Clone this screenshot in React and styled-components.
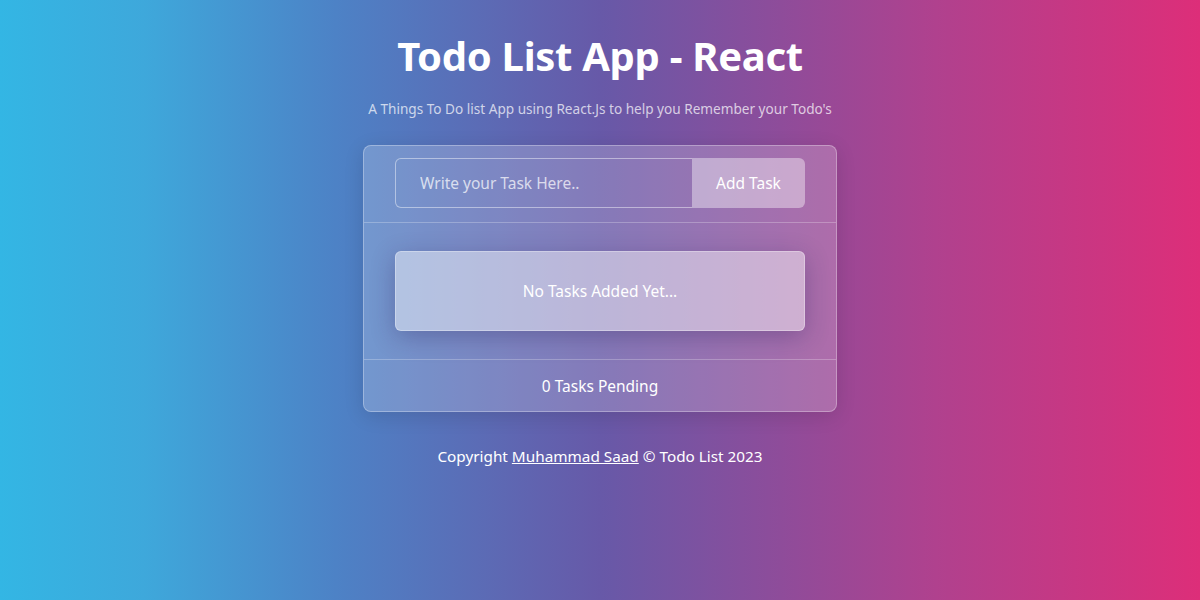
import styled, { createGlobalStyle } from "styled-components";

const GlobalStyle = createGlobalStyle`
  * { box-sizing: border-box; }
  html, body { margin: 0; padding: 0; }
  body {
    font-family: "Noto Sans", "Open Sans", sans-serif;
    background: linear-gradient(to right, #33b6e4 0%, #3ea8db 12%, #4d82c6 28%, #6759a8 50%, #b0418e 78%, #dd2e79 100%);
    min-height: 100vh;
    color: #fff;
  }
`;

const App = () => {
  return (
    <>
      <GlobalStyle />
      <Page>
        <Title>Todo List App - React</Title>
        <Subtitle>
          A Things To Do list App using React.Js to help you Remember your Todo's
        </Subtitle>
        <Card>
          <FormSection>
            <TaskForm onSubmit={(e) => e.preventDefault()}>
              <TaskInput type="text" placeholder="Write your Task Here.." />
              <AddButton type="submit">Add Task</AddButton>
            </TaskForm>
          </FormSection>
          <ListSection>
            <EmptyBox>No Tasks Added Yet...</EmptyBox>
          </ListSection>
          <CardFooter>0 Tasks Pending</CardFooter>
        </Card>
        <Copyright>
          Copyright <a href="#">Muhammad Saad</a> © Todo List 2023
        </Copyright>
      </Page>
    </>
  );
};

export default App;

const Page = styled.div`
  display: flex;
  flex-direction: column;
  align-items: center;
  padding-top: 30px;
  min-height: 600px;
`;

const Title = styled.h1`
  margin: 0;
  font-size: 40px;
  font-weight: 700;
  line-height: 52px;
  letter-spacing: -0.3px;
`;

const Subtitle = styled.p`
  margin: 17px 0 0;
  font-size: 13.6px;
  line-height: 20px;
  color: rgba(255, 255, 255, 0.72);
`;

const Card = styled.div`
  margin-top: 26px;
  width: 474px;
  background: rgba(255, 255, 255, 0.2);
  border: 1px solid rgba(255, 255, 255, 0.3);
  border-radius: 8px;
  box-shadow: 0 4px 20px rgba(0, 0, 0, 0.12);
`;

const FormSection = styled.div`
  padding: 12px 31px 14px;
  border-bottom: 1px solid rgba(255, 255, 255, 0.25);
`;

const TaskForm = styled.form`
  display: flex;
  height: 50px;
`;

const TaskInput = styled.input`
  flex: 1;
  min-width: 0;
  height: 100%;
  padding: 0 24px;
  font-family: inherit;
  font-size: 15.5px;
  color: #fff;
  background: transparent;
  border: 1px solid rgba(255, 255, 255, 0.45);
  border-right: none;
  border-radius: 6px 0 0 6px;
  outline: none;
  &::placeholder {
    color: rgba(255, 255, 255, 0.72);
  }
`;

const AddButton = styled.button`
  width: 113px;
  height: 100%;
  font-family: inherit;
  font-size: 15.5px;
  color: #fff;
  background: rgba(255, 255, 255, 0.4);
  border: none;
  border-radius: 0 6px 6px 0;
  cursor: pointer;
`;

const ListSection = styled.div`
  padding: 28px 31px 28px;
  border-bottom: 1px solid rgba(255, 255, 255, 0.25);
`;

const EmptyBox = styled.div`
  display: flex;
  align-items: center;
  justify-content: center;
  height: 80px;
  font-size: 15.5px;
  background: rgba(255, 255, 255, 0.45);
  border: 1px solid rgba(255, 255, 255, 0.3);
  border-radius: 6px;
  box-shadow: 0 6px 24px rgba(40, 30, 90, 0.3);
`;

const CardFooter = styled.div`
  display: flex;
  align-items: center;
  justify-content: center;
  height: 51px;
  font-size: 15.5px;
`;

const Copyright = styled.p`
  margin: 34px 0 0;
  font-size: 15.3px;
  line-height: 20px;
  a {
    color: #fff;
  }
`;
